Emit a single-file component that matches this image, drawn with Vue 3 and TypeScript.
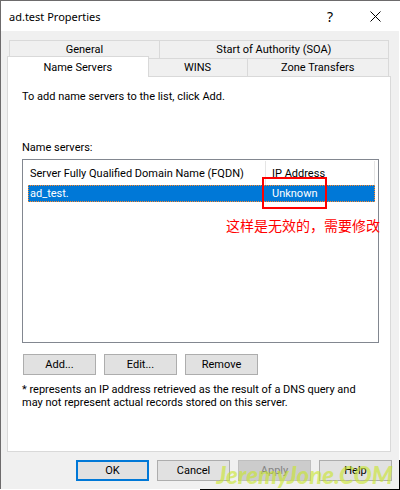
<script setup lang="ts">
import { ref } from 'vue'

interface NameServer {
  name: string
  address: string
}

const servers = ref<NameServer[]>([{ name: 'ad_test.', address: 'Unknown' }])
const selected = ref(0)
</script>

<template>
  <main class="dialog">
    <header class="titlebar">
      <h1>ad.test Properties</h1>
      <div class="window-controls">
        <button type="button" aria-label="Help for this window">?</button>
        <button type="button" aria-label="Close">
          <svg width="11" height="11" viewBox="0 0 11 11" aria-hidden="true">
            <path d="M0.5 0.5 L10.5 10.5 M10.5 0.5 L0.5 10.5" fill="none" stroke="#000" />
          </svg>
        </button>
      </div>
    </header>

    <div class="body">
      <div class="tabs" role="tablist">
        <div class="tab-row back">
          <button type="button" role="tab" class="tab general">General</button>
          <button type="button" role="tab" class="tab soa">Start of Authority (SOA)</button>
        </div>
        <div class="tab-row front">
          <button type="button" role="tab" class="tab active" aria-selected="true">Name Servers</button>
          <button type="button" role="tab" class="tab wins">WINS</button>
          <button type="button" role="tab" class="tab zone">Zone Transfers</button>
        </div>
      </div>

      <section class="panel" role="tabpanel">
        <p class="hint">To add name servers to the list, click Add.</p>
        <h2 id="servers-label">Name servers:</h2>
        <div class="list">
          <table aria-labelledby="servers-label">
            <thead>
              <tr>
                <th scope="col">Server Fully Qualified Domain Name (FQDN)</th>
                <th scope="col" class="address">IP Address</th>
              </tr>
            </thead>
            <tbody>
              <tr
                v-for="(server, index) in servers"
                :key="server.name"
                :class="{ selected: index === selected }"
                @click="selected = index"
              >
                <td>{{ server.name }}</td>
                <td class="address">{{ server.address }}</td>
              </tr>
            </tbody>
          </table>
          <div class="marker"></div>
          <p class="note">这样是无效的，需要修改</p>
        </div>
        <div class="actions">
          <button type="button" class="push">Add...</button>
          <button type="button" class="push">Edit...</button>
          <button type="button" class="push">Remove</button>
        </div>
        <p class="footnote">
          * represents an IP address retrieved as the result of a DNS query and may not represent
          actual records stored on this server.
        </p>
      </section>

      <footer class="buttons">
        <button type="button" class="push primary">OK</button>
        <button type="button" class="push">Cancel</button>
        <button type="button" class="push" disabled>Apply</button>
        <button type="button" class="push">Help</button>
      </footer>
    </div>
    <div class="watermark">JeremyJone.COM</div>
    <div class="edge-right"></div>
    <div class="edge-bottom"></div>
  </main>
</template>

<style>
body {
  margin: 0;
  background: #fff;
}
</style>

<style scoped>
* {
  box-sizing: border-box;
}

.dialog {
  position: relative;
  display: flex;
  flex-direction: column;
  min-height: 100vh;
  padding: 1px 1px 1px 0;
  font-family: Roboto, "Noto Sans CJK SC", sans-serif;
  font-size: 11px;
  line-height: 13px;
  color: #000;
}

.dialog::before {
  content: "";
  position: absolute;
  inset: 0 0 1px 0;
  border-top: 1px solid #6d6b6c;
  border-left: 1px solid #6d6b6c;
  pointer-events: none;
}

h1,
h2,
p {
  margin: 0;
  font-size: inherit;
  font-weight: normal;
}

button {
  margin: 0;
  padding: 0;
  font: inherit;
  color: inherit;
}

.titlebar {
  display: flex;
  justify-content: space-between;
  align-items: center;
  height: 30px;
  padding: 0 18px 0 9px;
}

.titlebar h1 {
  font-family: "Noto Sans", sans-serif;
  font-size: 11px;
}

.window-controls {
  display: flex;
  gap: 33px;
}

.window-controls button {
  display: flex;
  align-items: center;
  justify-content: center;
  width: 12px;
  height: 16px;
  border: 0;
  background: none;
  font-family: "Noto Sans", sans-serif;
  font-size: 14px;
}

.body {
  flex: 1;
  display: flex;
  flex-direction: column;
  padding: 9px 7px 8px;
  background: #f0f0f0;
}

.tabs,
.panel {
  margin-right: 1px;
}

.tab-row {
  display: flex;
}

.back {
  padding: 0 2px;
}

.front {
  padding-right: 2px;
}

.tab {
  height: 18px;
  border: 1px solid #d9d9d9;
  border-bottom: 0;
  border-left: 0;
  background: #f0f0f0;
}

.general {
  flex: 150;
  border-left: 1px solid #d9d9d9;
}

.soa {
  flex: 230;
}

.active {
  position: relative;
  flex: 141;
  height: 21px;
  margin: -2px 0 -1px;
  border-left: 1px solid #d9d9d9;
  background: #fff;
}

.wins {
  flex: 99;
}

.zone {
  flex: 142;
}

.panel {
  flex: 1;
  padding: 13px 11px 0 14px;
  border: 1px solid #d9d9d9;
  background: #fff;
}

.hint {
  margin-bottom: 38px;
}

.list {
  position: relative;
  height: 184px;
  margin-top: 5px;
  padding: 1px 3px 0 5px;
  border: 1px solid #828790;
}

table {
  width: 100%;
  border-collapse: separate;
  border-spacing: 0;
  table-layout: fixed;
}

th,
td {
  padding: 0 0 0 2px;
  font-weight: normal;
  text-align: left;
  white-space: nowrap;
}

th {
  height: 24px;
  border-right: 1px solid #e5e5e5;
}

td {
  height: 17px;
}

.address {
  width: 109px;
  padding-left: 6px;
}

.selected {
  background: #0078d7;
  color: #fff;
  outline: 1px dotted #ff8728;
  outline-offset: -1px;
}

.marker {
  position: absolute;
  top: 17px;
  right: 51px;
  width: 65px;
  height: 32px;
  border: 2px solid #f00;
}

.note {
  position: absolute;
  top: 56px;
  right: -2px;
  font-size: 14px;
  line-height: 20px;
  color: #f00;
  white-space: nowrap;
}

.actions {
  display: flex;
  gap: 8px;
  margin: 11px 0 8px 1px;
}

.push {
  width: 73px;
  height: 21px;
  border: 1px solid #adadad;
  background: #e1e1e1;
}

.push:disabled {
  border-color: #bfbfbf;
  background: #ccc;
  color: #838383;
}

.primary {
  border: 2px solid #0078d7;
}

.buttons {
  display: flex;
  justify-content: flex-end;
  gap: 8px;
  padding-top: 8px;
}

.watermark {
  position: absolute;
  right: 7px;
  bottom: 3px;
  font-family: Lato, sans-serif;
  font-size: 24px;
  font-style: italic;
  font-weight: 900;
  line-height: 24px;
  color: rgba(200, 230, 40, 0.6);
  pointer-events: none;
}

.edge-right {
  position: absolute;
  right: 0;
  bottom: 0;
  width: 1px;
  height: 30px;
  background: #000;
}

.edge-bottom {
  position: absolute;
  right: 0;
  bottom: 0;
  width: 50%;
  height: 1px;
  background: #000;
}
</style>
